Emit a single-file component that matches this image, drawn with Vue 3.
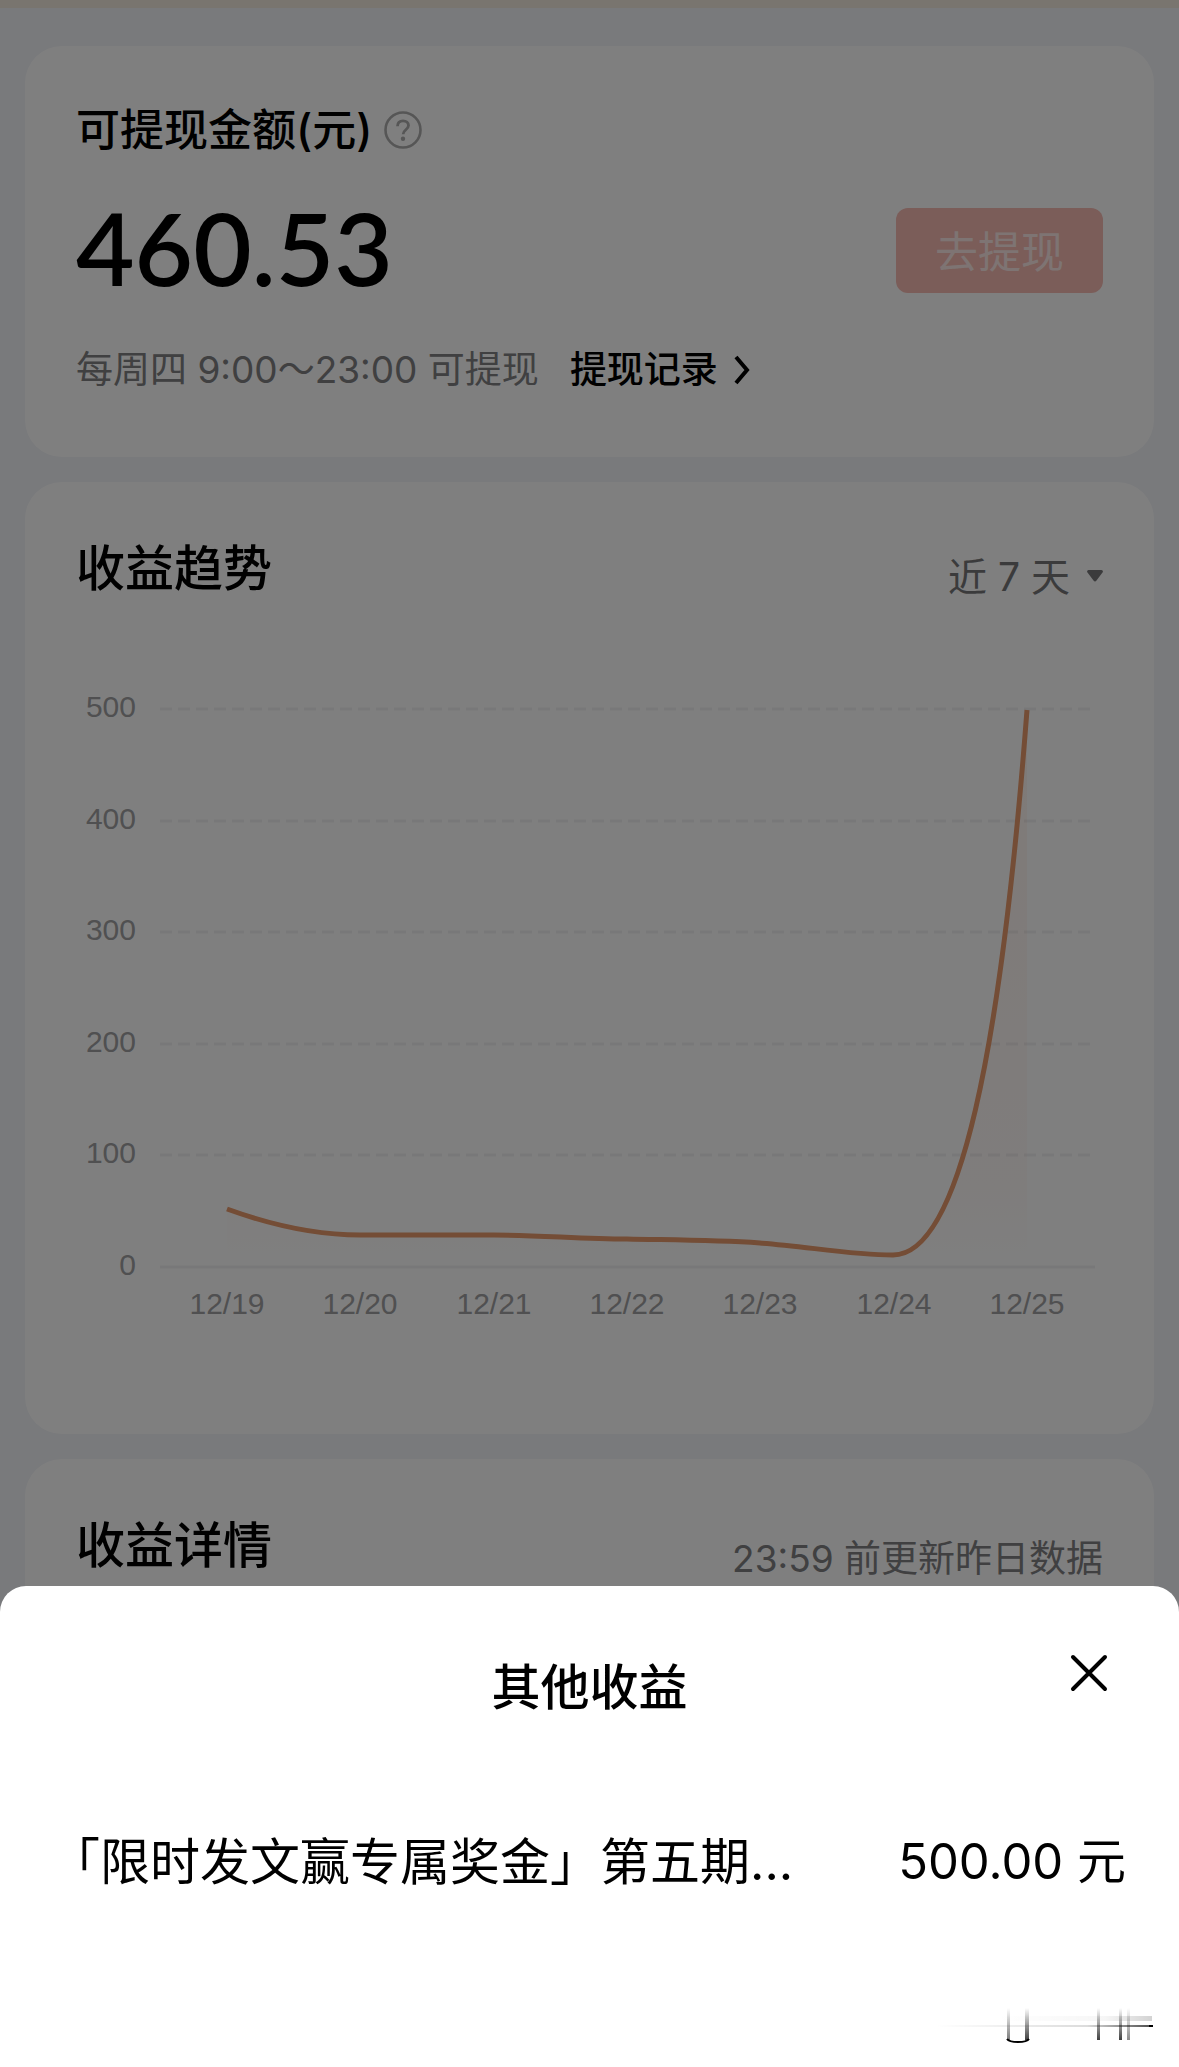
<script setup>
import { computed, ref } from 'vue'

const range = ref('近 7 天')
const ticks = [500, 400, 300, 200, 100, 0]
const days = ['12/19', '12/20', '12/21', '12/22', '12/23', '12/24', '12/25']

const baseY = 659
const rows = computed(() => ticks.map((value) => ({ value, y: Math.round(baseY - value * 1.116) })))
const columns = computed(() => days.map((label, i) => ({ label, x: Math.round(151 + i * 133.3) })))

const curve =
  'M151 601 C184 613 234 627 284 627 C330 627 372 627 418 627 C464 627 505 631 551 631 ' +
  'C596 632 639 632 684 635 C729 638 774 647 817 647 C884 647 925 442 951 102'
const area = `${curve} V659 H151 Z`
</script>

<template>
  <div class="page">
    <div class="strip"></div>
    <main class="cards">
      <section class="card balance">
        <div class="balance-title">
          <h2>可提现金额(元)</h2>
          <button class="help" type="button" aria-label="说明">
            <svg viewBox="0 0 38 38" width="38" height="38" fill="none" stroke="currentColor">
              <circle cx="19" cy="19" r="17.5" stroke-width="2.6" />
              <path d="M13.5 15.2c.1-3.4 2.3-5.4 5.5-5.4s5.500 2 5.500 4.800c0 4-5.400 4.400-5.400 8.600" stroke-width="2.8" />
              <circle cx="19" cy="27.8" r="2.2" fill="currentColor" stroke="none" />
            </svg>
          </button>
        </div>
        <div class="balance-row">
          <strong class="amount">460.53</strong>
          <button class="withdraw" type="button">去提现</button>
        </div>
        <div class="balance-note">
          <span>每周四 9:00～23:00 可提现</span>
          <a href="#records">提现记录
            <svg viewBox="0 0 16 30" width="16" height="30" fill="none" stroke="currentColor" stroke-width="4">
              <path d="M2 2 L13 15 L2 28" />
            </svg>
          </a>
        </div>
      </section>

      <section class="card trend">
        <div class="heading">
          <h2>收益趋势</h2>
          <label class="range">
            <select v-model="range" aria-label="时间范围">
              <option>近 7 天</option>
            </select>
            <svg viewBox="0 0 16 12" width="16" height="12">
              <path d="M1.5 0h13q2.200 .8 1 2.600L9.500 10.500q-1.500 1.800-3 0L.5 2.600Q-.7.8 1.500 0z" fill="currentColor" />
            </svg>
          </label>
        </div>
        <svg class="chart" viewBox="0 0 1027 736" role="img" aria-label="收益趋势">
          <defs>
            <linearGradient id="fade" x1="0" y1="0" x2="0" y2="1">
              <stop offset="0" stop-color="#f08040" stop-opacity="0.08" />
              <stop offset="0.85" stop-color="#f08060" stop-opacity="0.04" />
              <stop offset="1" stop-color="#f08060" stop-opacity="0" />
            </linearGradient>
          </defs>
          <g v-for="row in rows" :key="row.value">
            <line
              x1="84" :x2="row.value ? 1016 : 1019" :y1="row.y" :y2="row.y"
              :class="['grid', { solid: row.value === 0 }]"
            />
            <text x="60" :y="row.y + 8" text-anchor="end">{{ row.value }}</text>
          </g>
          <path :d="area" fill="url(#fade)" />
          <path :d="curve" class="curve" />
          <text v-for="col in columns" :key="col.label" :x="col.x" y="706" text-anchor="middle">{{ col.label }}</text>
        </svg>
      </section>

      <section class="card detail">
        <div class="heading">
          <h2>收益详情</h2>
          <span class="update">23:59 前更新昨日数据</span>
        </div>
      </section>
    </main>

    <div class="mask"></div>

    <section class="sheet" role="dialog" aria-labelledby="sheet-title">
      <header class="sheet-head">
        <h2 id="sheet-title">其他收益</h2>
        <button class="close" type="button" aria-label="关闭">
          <svg viewBox="0 0 40 40" width="40" height="40" fill="none" stroke="currentColor" stroke-width="4" stroke-linecap="round">
            <path d="M4 4 L36 36 M36 4 L4 36" />
          </svg>
        </button>
      </header>
      <div class="income">
        <span class="income-name">「限时发文赢专属奖金」第五期...</span>
        <span class="income-value">500.00 元</span>
      </div>
      <svg class="traces" viewBox="0 0 218 40" width="218" height="40" fill="none" aria-hidden="true">
        <defs>
          <linearGradient id="down" x1="0" y1="0" x2="0" y2="1">
            <stop offset="0" stop-color="#000" stop-opacity="0" />
            <stop offset="1" stop-color="#000" stop-opacity="0.75" />
          </linearGradient>
          <linearGradient id="across" x1="0" y1="0" x2="1" y2="0">
            <stop offset="0" stop-color="#000" stop-opacity="0" />
            <stop offset="0.7" stop-color="#000" stop-opacity="0.14" />
            <stop offset="1" stop-color="#000" stop-opacity="0.7" />
          </linearGradient>
        </defs>
        <g fill="url(#down)">
          <rect x="71" y="4" width="3" height="32" opacity="0.7" />
          <rect x="89" y="4" width="4" height="32" />
          <rect x="161" y="4" width="3" height="32" />
          <rect x="183" y="4" width="3" height="32" />
          <rect x="191" y="4" width="3" height="32" opacity="0.6" />
        </g>
        <path d="M71 35 Q73 38 82 38 Q91 38 93 35" stroke="#000" stroke-width="2" />
        <rect x="0" y="21" width="216" height="2" fill="url(#across)" />
        <rect x="60" y="12" width="156" height="5" fill="url(#across)" opacity="0.25" />
        <rect x="213" y="21" width="4" height="2" fill="#000" />
      </svg>
    </section>
  </div>
</template>

<style>
body {
  background: #f2f4f8;
}
</style>

<style scoped>
.page {
  height: 100vh;
  overflow: hidden;
  background: #f2f4f8;
  color: #000;
  font-family: Inter, "Noto Sans CJK SC", sans-serif;
}
h2 {
  margin: 0;
  font-size: 49px;
  line-height: 70px;
  font-weight: 500;
}
button,
select {
  border: 0;
  padding: 0;
  background: none;
  color: inherit;
  font: inherit;
}
svg {
  display: block;
}
.strip {
  height: 8px;
  background: #f3ebdf;
}
.cards {
  display: flex;
  flex-direction: column;
  gap: 25px;
  padding: 38px 25px 0;
}
.card {
  padding: 52px 51px 0;
  border-radius: 37px;
  background: #fff;
}
.balance {
  padding-bottom: 61px;
}
.balance-title {
  display: flex;
  align-items: center;
  gap: 12px;
}
.balance-title h2 {
  font-size: 44px;
  line-height: 64px;
}
.help {
  color: #acacac;
}
.balance-row {
  display: flex;
  align-items: center;
  justify-content: space-between;
  height: 100px;
  margin: 38px 0 44px;
}
.amount {
  padding-bottom: 6px;
  font-family: Lato, sans-serif;
  font-size: 101px;
  line-height: 100px;
  font-weight: 600;
}
.withdraw {
  width: 207px;
  height: 85px;
  padding-bottom: 3px;
  border-radius: 12px;
  background: #f6bab2;
  color: rgba(255, 255, 255, 0.7);
  font-size: 43px;
}
.balance-note {
  display: flex;
  gap: 31px;
  color: #808082;
  font-size: 37px;
  line-height: 52px;
}
.balance-note a {
  display: flex;
  align-items: center;
  gap: 16px;
  color: #000;
  font-weight: 500;
  text-decoration: none;
}
.trend {
  padding-bottom: 90px;
}
.detail {
  padding-bottom: 200px;
}
.heading {
  display: flex;
  justify-content: space-between;
  height: 74px;
}
.range {
  display: flex;
  align-items: center;
  align-self: flex-end;
  gap: 16px;
  color: #777779;
}
.range select {
  appearance: none;
  height: 64px;
  font-size: 39px;
}
.chart {
  width: 100%;
  height: auto;
}
.chart text {
  fill: #a0a0a2;
  font-family: "Liberation Sans", Arial, sans-serif;
  font-size: 30px;
}
.grid {
  stroke: #f1f1f3;
  stroke-width: 3;
  stroke-dasharray: 12 6;
}
.grid.solid {
  stroke-dasharray: none;
}
.curve {
  fill: none;
  stroke: #e89a6c;
  stroke-width: 5;
}
.update {
  align-self: flex-end;
  color: #808082;
  font-size: 37px;
  line-height: 52px;
}
.mask {
  position: fixed;
  inset: 0;
  background: rgba(0, 0, 0, 0.5);
}
.sheet {
  position: fixed;
  right: 0;
  bottom: 0;
  left: 0;
  padding: 67px 0 23px;
  border-radius: 26px 26px 0 0;
  background: #fff;
}
.sheet-head {
  display: grid;
  grid-template-columns: 1fr auto 1fr;
  padding: 0 70px;
}
.sheet-head h2 {
  grid-column: 2;
}
.close {
  justify-self: end;
  align-self: start;
}
.income {
  display: flex;
  justify-content: space-between;
  margin-top: 104px;
  padding: 0 53px 0 50px;
  font-size: 50px;
  line-height: 70px;
  white-space: nowrap;
}
.income-value {
  font-size: 49px;
}
.traces {
  margin: 107px 25px 0 auto;
}
</style>
